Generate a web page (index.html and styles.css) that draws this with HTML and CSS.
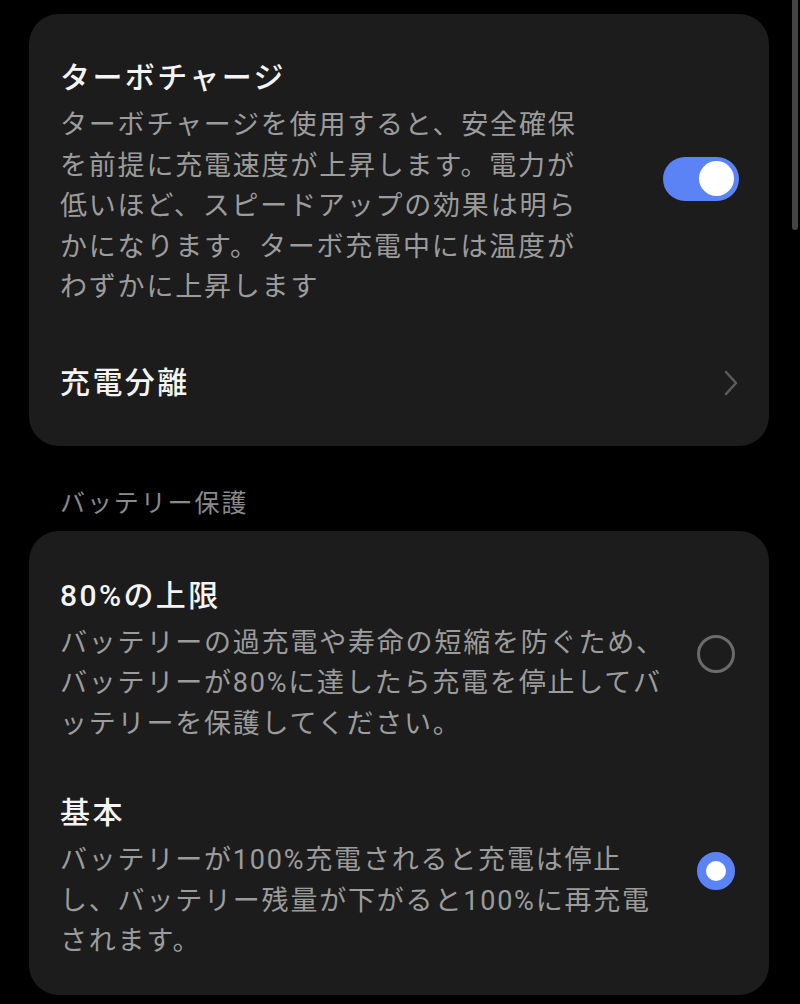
FILE: index.html
```html
<!DOCTYPE html>
<html lang="ja">
<head>
<meta charset="utf-8">
<title>バッテリー</title>
<link rel="stylesheet" href="styles.css">
</head>
<body>
<div class="scrollbar"></div>
<main class="page">
  <section class="card">
    <div class="row row-turbo">
      <div class="text">
        <div class="title">ターボチャージ</div>
        <div class="desc">ターボチャージを使用すると、安全確保<br>を前提に充電速度が上昇します。電力が<br>低いほど、スピードアップの効果は明ら<br>かになります。ターボ充電中には温度が<br>わずかに上昇します</div>
      </div>
      <div class="toggle on"><span class="thumb"></span></div>
    </div>
    <div class="row row-link">
      <div class="title">充電分離</div>
      <svg class="chevron" width="16" height="26" viewBox="0 0 16 26" aria-hidden="true"><path d="M3 2 L13 13 L3 24" fill="none" stroke="#5a5a5a" stroke-width="2.6" stroke-linecap="round" stroke-linejoin="round"/></svg>
    </div>
  </section>

  <h2 class="section-header">バッテリー保護</h2>

  <section class="card card-radio">
    <div class="row row-option first">
      <div class="text">
        <div class="title">80%の上限</div>
        <div class="desc">バッテリーの過充電や寿命の短縮を防ぐため、<br>バッテリーが80%に達したら充電を停止してバ<br>ッテリーを保護してください。</div>
      </div>
      <span class="radio"></span>
    </div>
    <div class="row row-option">
      <div class="text">
        <div class="title">基本</div>
        <div class="desc">バッテリーが100%充電されると充電は停止<br>し、バッテリー残量が下がると100%に再充電<br>されます。</div>
      </div>
      <span class="radio checked"></span>
    </div>
  </section>
</main>
</body>
</html>
```

FILE: styles.css
```css
* { box-sizing: border-box; }

html, body {
  margin: 0;
  padding: 0;
  background: #000;
}

body {
  font-family: Roboto, "Noto Sans CJK JP", sans-serif;
  color: #f2f2f2;
  width: 800px;
  height: 1004px;
  overflow: hidden;
  position: relative;
}

.scrollbar {
  position: absolute;
  top: 0;
  right: 2px;
  width: 6px;
  height: 230px;
  background: #444;
  border-radius: 0 0 3px 3px;
}

.page {
  padding: 14px 31px 0 29px;
}

.card {
  background: #1c1c1c;
  border-radius: 30px;
}

.row {
  display: flex;
  align-items: center;
  justify-content: space-between;
  padding-left: 31px;
}

.text {
  display: flex;
  flex-direction: column;
}

.title {
  font-size: 30px;
  line-height: 40px;
  font-weight: 500;
  letter-spacing: 2.4px;
  color: #f4f4f4;
}

.desc {
  margin-top: 7px;
  font-size: 27px;
  line-height: 40.5px;
  letter-spacing: 1.8px;
  color: #9c9c9c;
}

.row-turbo {
  padding-top: 44px;
  padding-bottom: 12px;
  padding-right: 30px;
}

.toggle {
  width: 76px;
  height: 44px;
  border-radius: 22px;
  background: #5b83f6;
  display: flex;
  align-items: center;
  justify-content: flex-end;
  padding: 0 5px;
  margin-bottom: 8px;
}

.thumb {
  width: 35px;
  height: 35px;
  border-radius: 50%;
  background: #fff;
}

.row-link {
  padding-top: 43px;
  padding-bottom: 43px;
  padding-right: 30px;
}

.chevron {
  display: block;
}

.section-header {
  margin: 41px 0 10px 31px;
  font-size: 25px;
  line-height: 34px;
  font-weight: 400;
  letter-spacing: 1.9px;
  color: #8a8a8a;
}

.card-radio {
  padding-bottom: 10px;
}

.row-option {
  padding-top: 26px;
  padding-bottom: 23px;
  padding-right: 34px;
}

.row-option.first {
  padding-top: 45px;
}

.radio {
  width: 38px;
  height: 38px;
  border-radius: 50%;
  border: 3px solid #6b6b6b;
  flex: none;
  margin-bottom: 12px;
}

.radio.checked {
  border: 9.5px solid #5b83f6;
  background: #fff;
}
```
